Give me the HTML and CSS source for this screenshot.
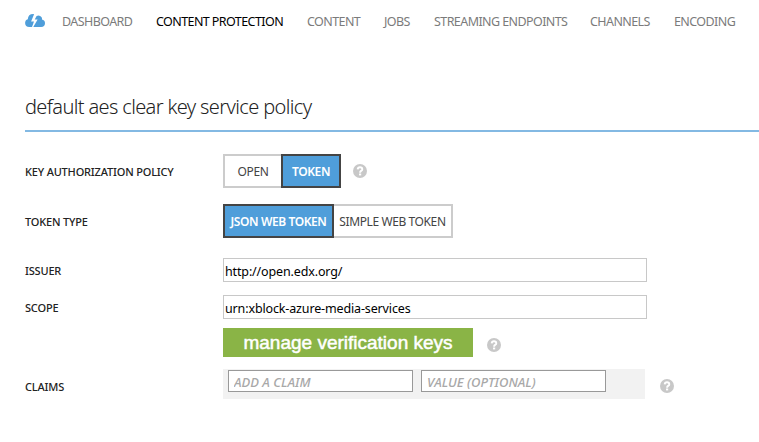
FILE: index.html
```html
<!DOCTYPE html>
<html lang="en">
<head>
<meta charset="utf-8">
<title>Content protection</title>
<link rel="stylesheet" href="styles.css">
</head>
<body>
<nav class="nav">
  <svg class="logo" viewBox="0 0 20 13" width="20" height="13"><path fill="#4f9eda" d="M4.3 13A4.2 4.2 0 0 1 .1 8.9Q.1 6 2.8 5.2Q3.1 0 8.2 0L9.1.2L6.1 7.6H9L7 13ZM8.3 13L12.6 5.6H9.7L11.6 2Q14.6.7 16.4 3.1Q17.3 4.3 16.9 5.6Q20 6.3 20 9.2Q19.8 13 16.2 13Z"/></svg>
  <a class="link dashboard">DASHBOARD</a>
  <a class="link protection active">CONTENT PROTECTION</a>
  <a class="link content">CONTENT</a>
  <a class="link jobs">JOBS</a>
  <a class="link streaming">STREAMING ENDPOINTS</a>
  <a class="link channels">CHANNELS</a>
  <a class="link encoding">ENCODING</a>
</nav>
<main class="main">
  <h1 class="title">default aes clear key service policy</h1>
  <div class="row policy">
    <span class="label">KEY AUTHORIZATION POLICY</span>
    <div class="group"><button class="option open">OPEN</button><button class="option token selected">TOKEN</button></div>
    <span class="help"><svg viewBox="0 0 14 14" width="14" height="14"><circle cx="7" cy="7" r="7" fill="#c8c8c8"/><path d="M4.7 5.4Q4.8 3.3 7 3.3T9.3 5.2Q9.3 6.2 8.1 6.9Q7.1 7.5 7.1 8.7" fill="none" stroke="#fff" stroke-width="1.9"/><path d="M6 9.5h2.2v1.9h-2.2z" fill="#fff"/></svg></span>
  </div>
  <div class="row type">
    <span class="label">TOKEN TYPE</span>
    <div class="group"><button class="option json selected">JSON WEB TOKEN</button><button class="option simple">SIMPLE WEB TOKEN</button></div>
  </div>
  <div class="row issuer">
    <span class="label">ISSUER</span>
    <input class="field issuer-field" value="http://open.edx.org/">
  </div>
  <div class="row scope">
    <span class="label">SCOPE</span>
    <input class="field scope-field" value="urn:xblock-azure-media-services">
  </div>
  <div class="row keys">
    <span class="label"></span>
    <button class="manage">manage verification keys</button>
    <span class="help"><svg viewBox="0 0 14 14" width="14" height="14"><circle cx="7" cy="7" r="7" fill="#c8c8c8"/><path d="M4.7 5.4Q4.8 3.3 7 3.3T9.3 5.2Q9.3 6.2 8.1 6.9Q7.1 7.5 7.1 8.7" fill="none" stroke="#fff" stroke-width="1.9"/><path d="M6 9.5h2.2v1.9h-2.2z" fill="#fff"/></svg></span>
  </div>
  <div class="row claims">
    <span class="label">CLAIMS</span>
    <div class="panel"><input class="claim name" placeholder="ADD A CLAIM"><input class="claim value" placeholder="VALUE (OPTIONAL)"></div>
    <span class="help"><svg viewBox="0 0 14 14" width="14" height="14"><circle cx="7" cy="7" r="7" fill="#c8c8c8"/><path d="M4.7 5.4Q4.8 3.3 7 3.3T9.3 5.2Q9.3 6.2 8.1 6.9Q7.1 7.5 7.1 8.7" fill="none" stroke="#fff" stroke-width="1.9"/><path d="M6 9.5h2.2v1.9h-2.2z" fill="#fff"/></svg></span>
  </div>
</main>
</body>
</html>
```
FILE: styles.css
```css
* { box-sizing: border-box; }
body { margin: 0; background: #fff; color: #333; font-family: "Noto Sans", "Open Sans", sans-serif; font-size: 12px; overflow: hidden; }
button, input { margin: 0; padding: 0; border-radius: 0; font-family: inherit; outline: none; }
.nav { display: flex; height: 43px; padding-left: 25px; align-items: center; white-space: nowrap; }
.logo { flex: none; margin: -3px 17px 0 0; }
.link { flex: none; color: #7b7b7b; font-size: 12.5px; letter-spacing: -0.58px; }
.active { color: #000; }
.dashboard { width: 94px; }
.protection { width: 151px; }
.content { width: 77px; }
.jobs { width: 50px; }
.streaming { width: 156px; }
.channels { width: 84px; }
.encoding { width: 61px; }
.main { padding: 47px 0 0 25px; }
.title { margin: 0 0 22px; height: 42px; border-bottom: 2px solid #83b9e3; color: #222; font-size: 20px; font-weight: 300; line-height: 34px; letter-spacing: -0.63px; white-space: nowrap; }
.row { display: flex; align-items: center; }
.label { flex: none; width: 198px; color: #222; font-size: 11px; font-weight: 500; letter-spacing: -0.18px; line-height: 16px; padding-top: 2px; white-space: nowrap; }
.group { display: flex; }
.option { height: 34px; border: 2px solid #ccc; background: #fff; color: #444; font-size: 12px; letter-spacing: -0.4px; white-space: nowrap; }
.selected { border-color: #444; background: #4f9eda; color: #fff; font-weight: 600; }
.open { width: 58px; border-right: 0; }
.token { width: 60px; }
.json { width: 111px; }
.simple { width: 119px; border-left: 0; }
.help { display: flex; }
.policy { height: 34px; }
.policy .help { margin-left: 12px; }
.type { height: 34px; margin-top: 16px; }
.issuer { height: 24px; margin-top: 20px; }
.scope { height: 24px; margin-top: 13px; }
.field { width: 424px; height: 24px; border: 1px solid #c8c8c8; padding: 3px 1px 0; color: #000; font-size: 12.5px; letter-spacing: -0.14px; }
.keys { height: 29px; margin-top: 9px; }
.manage { width: 250px; height: 29px; border: 0; background: #8ab446; color: #fff; font-family: "Liberation Sans", Arial, sans-serif; font-size: 19px; -webkit-text-stroke: 0.5px #fff; }
.keys .help { margin: 4px 0 0 14px; }
.claims { height: 30px; margin-top: 12px; }
.claims .label { padding-top: 5px; }
.panel { display: flex; width: 422px; height: 30px; padding: 1px 0 0 5px; gap: 8px; background: #f2f2f2; }
.claim { width: 185px; height: 22px; border: 1px solid #999; padding: 2px 5px 0; font-size: 13px; font-weight: 500; font-style: italic; letter-spacing: 0; }
.claim::placeholder { color: #a8a8a8; }
.claims .help { margin: 4px 0 0 15px; }
```
